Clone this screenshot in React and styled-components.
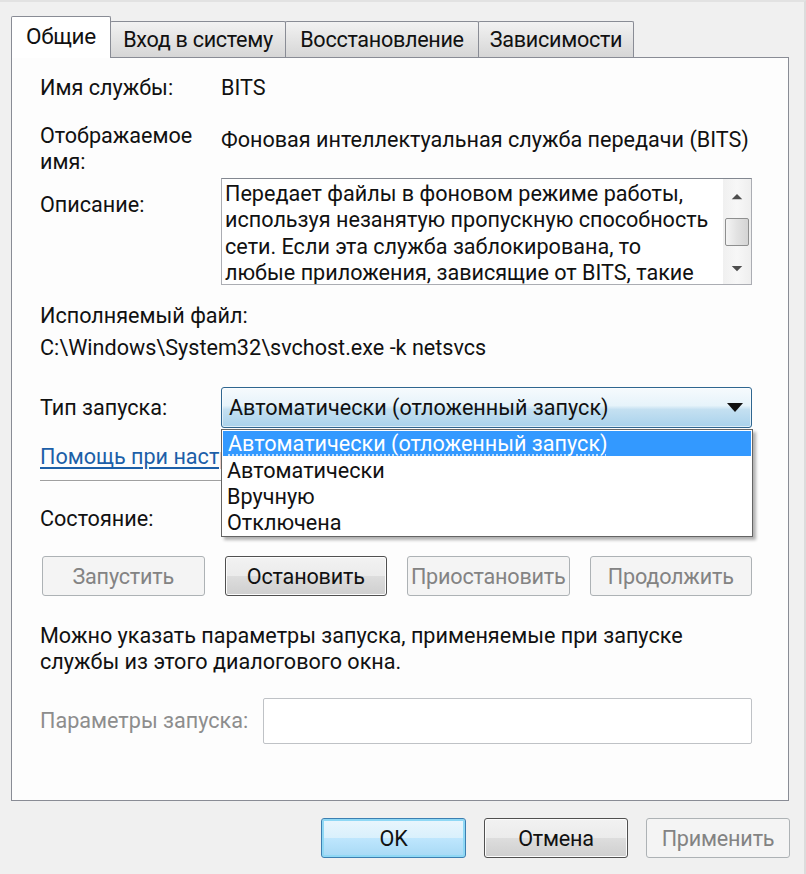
import React from "react";
import styled, { createGlobalStyle, css } from "styled-components";

const Global = createGlobalStyle`
  html, body { margin: 0; padding: 0; background: #f0f0f0; }
  body { font-family: "Roboto", "Noto Sans", sans-serif; font-size: 21.6px; color: #111; }
  * { box-sizing: border-box; }
`;

const Window = styled.div`
  width: 806px;
  height: 874px;
  background: #f0f0f0;
  border-top: 2px solid #e2e2e2;
  border-right: 2px solid #dcdcdc;
  padding: 14px 14px 0 11px;
  display: flex;
  flex-direction: column;
`;

const TabStrip = styled.div`
  display: flex;
  align-items: flex-end;
  height: 41px;
  position: relative;
  z-index: 1;
`;

const Tab = styled.div`
  width: ${(p) => p.$w}px;
  border: 1px solid #898c95;
  border-bottom: none;
  margin-left: -1px;
  display: flex;
  align-items: center;
  justify-content: center;
  letter-spacing: -0.3px;
  white-space: nowrap;
  ${(p) =>
    p.$active
      ? css`
          height: 42px;
          margin-bottom: -1px;
          margin-left: 0;
          background: #fff;
          padding-bottom: 4px;
          font-size: 22.5px;
          border-radius: 2px 2px 0 0;
        `
      : css`
          height: 36px;
          background: linear-gradient(#f2f2f2, #e4e4e4 50%, #d6d6d6);
          border-radius: 2px 2px 0 0;
        `}
`;

const Panel = styled.div`
  position: relative;
  width: 778px;
  height: 744px;
  background: #fdfdfd;
  border: 1px solid #898c95;
  padding: 17px 36px 0 28px;
`;

const Row = styled.div`
  display: grid;
  grid-template-columns: ${(p) => p.$label || 181}px 1fr;
  align-items: ${(p) => p.$align || "start"};
  margin-top: ${(p) => p.$mt || 0}px;
  line-height: 26px;
`;

const Label = styled.div`
  color: ${(p) => (p.$disabled ? "#8d8d8d" : "#111")};
  padding-top: ${(p) => p.$pt || 0}px;
  white-space: nowrap;
`;

const Value = styled.div`
  padding-top: ${(p) => p.$pt || 0}px;
  white-space: nowrap;
`;

const Line = styled.div`
  line-height: 26px;
  margin-top: ${(p) => p.$mt || 0}px;
  white-space: nowrap;
`;

const DescBox = styled.div`
  height: 107px;
  border: 1px solid #abadb3;
  border-top-color: #828790;
  background: #fff;
  display: flex;
  overflow: hidden;
`;

const DescText = styled.div`
  flex: 1;
  padding: 2px 0 0 3px;
  line-height: 26.3px;
  white-space: nowrap;
  overflow: hidden;
`;

const ScrollBar = styled.div`
  width: 28px;
  flex: none;
  background: linear-gradient(90deg, #f0f0f0, #f7f7f7 50%, #eeeeee);
  display: flex;
  flex-direction: column;
  align-items: center;
  justify-content: space-between;
  padding: 14px 0 12px;
`;

const Thumb = styled.div`
  width: 24px;
  height: 28px;
  border: 1px solid #8e8f8f;
  border-radius: 2px;
  background: linear-gradient(90deg, #f4f4f4, #e2e2e2 50%, #d4d4d4);
  margin-top: -2px;
`;

const Combo = styled.div`
  height: 41px;
  border: 1px solid #2f6690;
  border-radius: 3px;
  background: linear-gradient(#f6fafd, #e6f3fa 45%, #c4e0f1 55%, #a9d2ec);
  box-shadow: inset 0 0 0 1px rgba(255, 255, 255, 0.6);
  display: flex;
  align-items: center;
  justify-content: space-between;
  padding: 0 8px 0 7px;
  white-space: nowrap;
`;

const Caret = styled.svg`
  width: ${(p) => p.$w || 16}px;
  height: ${(p) => p.$h || 9}px;
  flex: none;
`;

const LinkClip = styled.div`
  width: 181px;
  overflow: hidden;
  white-space: nowrap;
  line-height: 26px;
  margin-top: 16px;
`;

const Link = styled.a`
  color: #1c5fa8;
  text-decoration: underline;
  text-underline-offset: 3px;
`;

const Separator = styled.div`
  height: 2px;
  border-top: 1px solid #a0a0a0;
  border-bottom: 1px solid #fff;
  margin-top: 10px;
`;

const ButtonGrid = styled.div`
  display: grid;
  grid-template-columns: repeat(4, 1fr);
  column-gap: 20px;
  margin: 24px 0 0 2px;
`;

const Button = styled.button`
  height: 40px;
  width: ${(p) => (p.$w ? `${p.$w}px` : "auto")};
  font: inherit;
  font-size: 21.6px;
  border-radius: 3px;
  letter-spacing: -0.2px;
  padding: 0;
  white-space: nowrap;
  ${(p) =>
    p.disabled
      ? css`
          color: #838383;
          border: 1px solid #adb2b5;
          background: #f4f4f4;
        `
      : p.$focused
      ? css`
          color: #111;
          border: 1px solid #3c7fb1;
          background: linear-gradient(#eaf6fd, #d9f0fc 50%, #bee6fd 51%, #a7d9f5);
          box-shadow: inset 0 0 0 2px #8fd8f5;
        `
      : css`
          color: #111;
          border: 1px solid #505050;
          background: linear-gradient(#f2f2f2, #ebebeb 50%, #dddddd 51%, #cfcfcf);
          box-shadow: inset 0 0 0 1px #fcfcfc;
        `}
`;

const ParamInput = styled.div`
  height: 46px;
  border: 1px solid #bfc2c6;
  border-radius: 2px;
  background: #fff;
`;

const Dropdown = styled.div`
  position: absolute;
  left: 209px;
  top: 371px;
  width: 532px;
  height: 108px;
  background: #fff;
  border: 1px solid #646464;
  padding: 1px;
  box-shadow: 3px 3px 3px rgba(0, 0, 0, 0.3);
  z-index: 5;
`;

const Option = styled.div`
  height: ${(p) => (p.$selected ? 25 : 26)}px;
  line-height: ${(p) => (p.$selected ? 25 : 26)}px;
  padding-left: ${(p) => (p.$selected ? 5 : 4)}px;
  white-space: nowrap;
  background: ${(p) => (p.$selected ? "#3399ff" : "transparent")};
  color: ${(p) => (p.$selected ? "#fff" : "#111")};
  margin-bottom: ${(p) => (p.$selected ? 2 : 0)}px;
  ${(p) =>
    p.$selected &&
    css`
      text-decoration: underline dotted rgba(255, 255, 255, 0.7);
      text-underline-offset: 3px;
    `}
`;

const Footer = styled.div`
  display: flex;
  justify-content: flex-end;
  gap: 18px;
  margin-top: 17px;
`;

export default function App() {
  return (
    <>
      <Global />
      <Window>
        <TabStrip>
          <Tab $active $w={100}>Общие</Tab>
          <Tab $w={176}>Вход в систему</Tab>
          <Tab $w={194}>Восстановление</Tab>
          <Tab $w={156}>Зависимости</Tab>
        </TabStrip>
        <Panel>
          <Row>
            <Label>Имя службы:</Label>
            <Value>BITS</Value>
          </Row>
          <Row $mt={22}>
            <Label>
              Отображаемое
              <br />
              имя:
            </Label>
            <Value $pt={4}>Фоновая интеллектуальная служба передачи (BITS)</Value>
          </Row>
          <Row $mt={3}>
            <Label $pt={14}>Описание:</Label>
            <DescBox>
              <DescText>
                Передает файлы в фоновом режиме работы,
                <br />
                используя незанятую пропускную способность
                <br />
                сети. Если эта служба заблокирована, то
                <br />
                любые приложения, зависящие от BITS, такие
              </DescText>
              <ScrollBar>
                <Caret viewBox="0 0 16 9" $w={12} $h={7}>
                  <path d="M1 8 L8 1 L15 8 Z" fill="#4d4d4d" />
                </Caret>
                <Thumb />
                <Caret viewBox="0 0 16 9" $w={12} $h={7}>
                  <path d="M1 1 L8 8 L15 1 Z" fill="#4d4d4d" />
                </Caret>
              </ScrollBar>
            </DescBox>
          </Row>
          <Line $mt={18}>Исполняемый файл:</Line>
          <Line $mt={6}>C:\Windows\System32\svchost.exe -k netsvcs</Line>
          <Row $mt={26} $align="center">
            <Label>Тип запуска:</Label>
            <Combo>
              <span>Автоматически (отложенный запуск)</span>
              <Caret viewBox="0 0 16 9">
                <path d="M0 0 H16 L8 9 Z" fill="#111" />
              </Caret>
            </Combo>
          </Row>
          <LinkClip>
            <Link href="#">Помощь при настройке параметров восстановления служб.</Link>
          </LinkClip>
          <Separator />
          <Row $mt={24}>
            <Label>Состояние:</Label>
          </Row>
          <ButtonGrid>
            <Button disabled>Запустить</Button>
            <Button>Остановить</Button>
            <Button disabled>Приостановить</Button>
            <Button disabled>Продолжить</Button>
          </ButtonGrid>
          <Line $mt={27}>Можно указать параметры запуска, применяемые при запуске</Line>
          <Line>службы из этого диалогового окна.</Line>
          <Row $mt={23} $label={223} $align="center">
            <Label $disabled>Параметры запуска:</Label>
            <ParamInput />
          </Row>
          <Dropdown>
            <Option $selected>Автоматически (отложенный запуск)</Option>
            <Option>Автоматически</Option>
            <Option>Вручную</Option>
            <Option>Отключена</Option>
          </Dropdown>
        </Panel>
        <Footer>
          <Button $focused $w={145}>OK</Button>
          <Button $w={144}>Отмена</Button>
          <Button disabled $w={144}>Применить</Button>
        </Footer>
      </Window>
    </>
  );
}
